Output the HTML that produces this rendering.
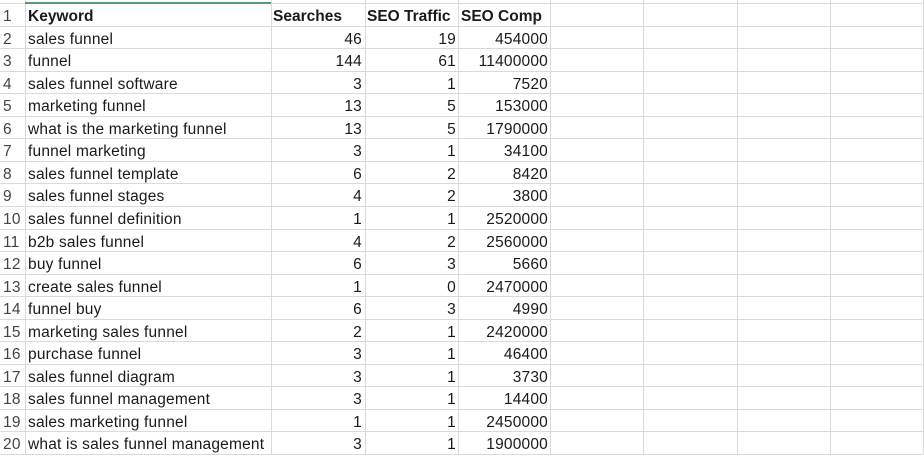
<!DOCTYPE html>
<html><head><style>
body{margin:0;width:924px;height:454px;background:#fff;overflow:hidden;font-family:"Liberation Sans",sans-serif;font-size:15.5px;letter-spacing:0.2px;color:#1a1a1a;position:relative}
.v{position:absolute;top:0;bottom:0;width:1px;background:#dadada}
.h{position:absolute;left:0;right:0;height:1px;background:#dadada}
.r{position:absolute;left:0;width:924px;height:22px;line-height:23px}
.r span{position:absolute;white-space:nowrap}
.n{left:3px;color:#444}
.a{left:28px}
.b{right:562px}
.c{right:468px}
.d{right:376px}
.hd span{font-weight:bold;letter-spacing:0}
.hd .n{font-weight:normal}
.hb{left:273px}.hc{left:367px}.hdd{left:461px}
</style></head><body>
<div class="v" style="left:25px"></div>
<div class="v" style="left:271px"></div>
<div class="v" style="left:365px"></div>
<div class="v" style="left:458px"></div>
<div class="v" style="left:550px"></div>
<div class="v" style="left:643px"></div>
<div class="v" style="left:737px"></div>
<div class="v" style="left:830px"></div>
<div class="v" style="left:923px"></div>
<div id="lines"></div>
<div style="position:absolute;left:25px;top:2px;width:246px;height:2px;background:#5a9b6e"></div>
<div id="rows"></div>
<script>
var d=[["Keyword","Searches","SEO Traffic","SEO Comp"],["sales funnel",46,19,454000],["funnel",144,61,11400000],["sales funnel software",3,1,7520],["marketing funnel",13,5,153000],["what is the marketing funnel",13,5,1790000],["funnel marketing",3,1,34100],["sales funnel template",6,2,8420],["sales funnel stages",4,2,3800],["sales funnel definition",1,1,2520000],["b2b sales funnel",4,2,2560000],["buy funnel",6,3,5660],["create sales funnel",1,0,2470000],["funnel buy",6,3,4990],["marketing sales funnel",2,1,2420000],["purchase funnel",3,1,46400],["sales funnel diagram",3,1,3730],["sales funnel management",3,1,14400],["sales marketing funnel",1,1,2450000],["what is sales funnel management",3,1,1900000]];
var h="",l="";
for(var i=0;i<=20;i++){l+='<div class="h" style="top:'+(3+i*22.55).toFixed(1)+'px"></div>';}
for(var i=0;i<20;i++){var t=(5+i*22.55).toFixed(1);var hd=i==0;
h+='<div class="r'+(hd?' hd':'')+'" style="top:'+t+'px"><span class="n">'+(i+1)+'</span><span class="a">'+d[i][0]+'</span><span class="'+(hd?'hb':'b')+'">'+d[i][1]+'</span><span class="'+(hd?'hc':'c')+'">'+d[i][2]+'</span><span class="'+(hd?'hdd':'d')+'">'+d[i][3]+'</span></div>';}
document.getElementById("lines").innerHTML=l;document.getElementById("rows").innerHTML=h;
</script>
</body></html>
